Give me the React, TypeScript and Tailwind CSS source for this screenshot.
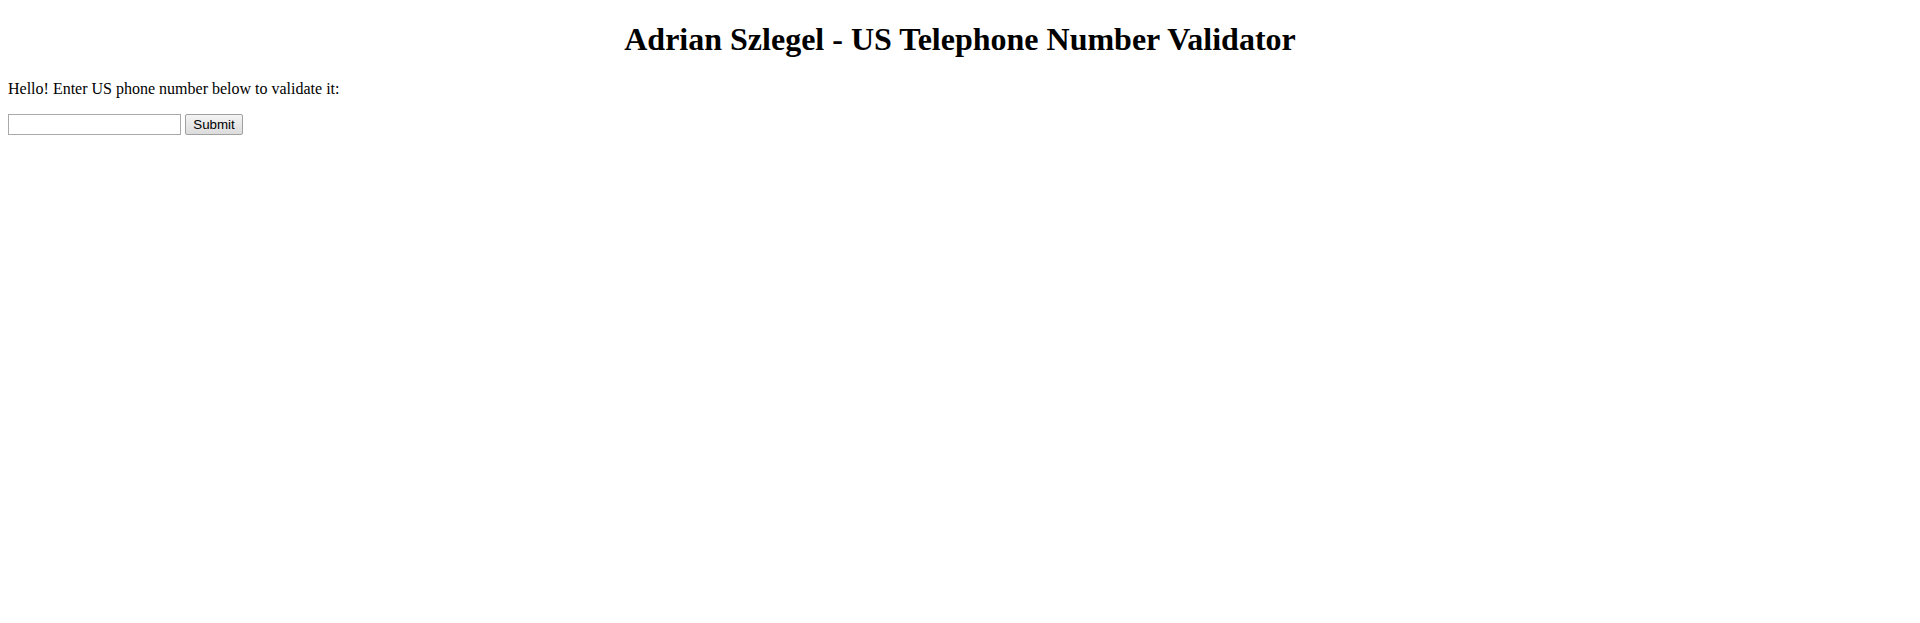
export default function App() {
  return (
    <div className="min-h-screen bg-white px-2 pt-[21.44px] text-black font-['Liberation_Serif','Times_New_Roman',serif] text-base">
      <h1 className="text-center text-[32px] font-bold leading-[36.8px]">
        Adrian Szlegel - US Telephone Number Validator
      </h1>
      <p className="mt-[21.44px] leading-[18.4px]">Hello! Enter US phone number below to validate it:</p>
      <form className="mt-4 flex items-start gap-1" onSubmit={(e) => e.preventDefault()}>
        <input
          type="text"
          className="box-border h-[21px] w-[173px] border border-[#a9a9a9] bg-white px-[2px] font-['Liberation_Sans',Arial,sans-serif] text-[13.33px] outline-none"
        />
        <button
          type="submit"
          className="box-border flex h-[21px] w-[58px] items-center justify-center rounded-[2px] border border-[#a0a0a0] bg-gradient-to-b from-[#f4f4f4] to-[#dcdcdc] font-['Liberation_Sans',Arial,sans-serif] text-[13.33px] leading-none text-black"
        >
          Submit
        </button>
      </form>
    </div>
  );
}
